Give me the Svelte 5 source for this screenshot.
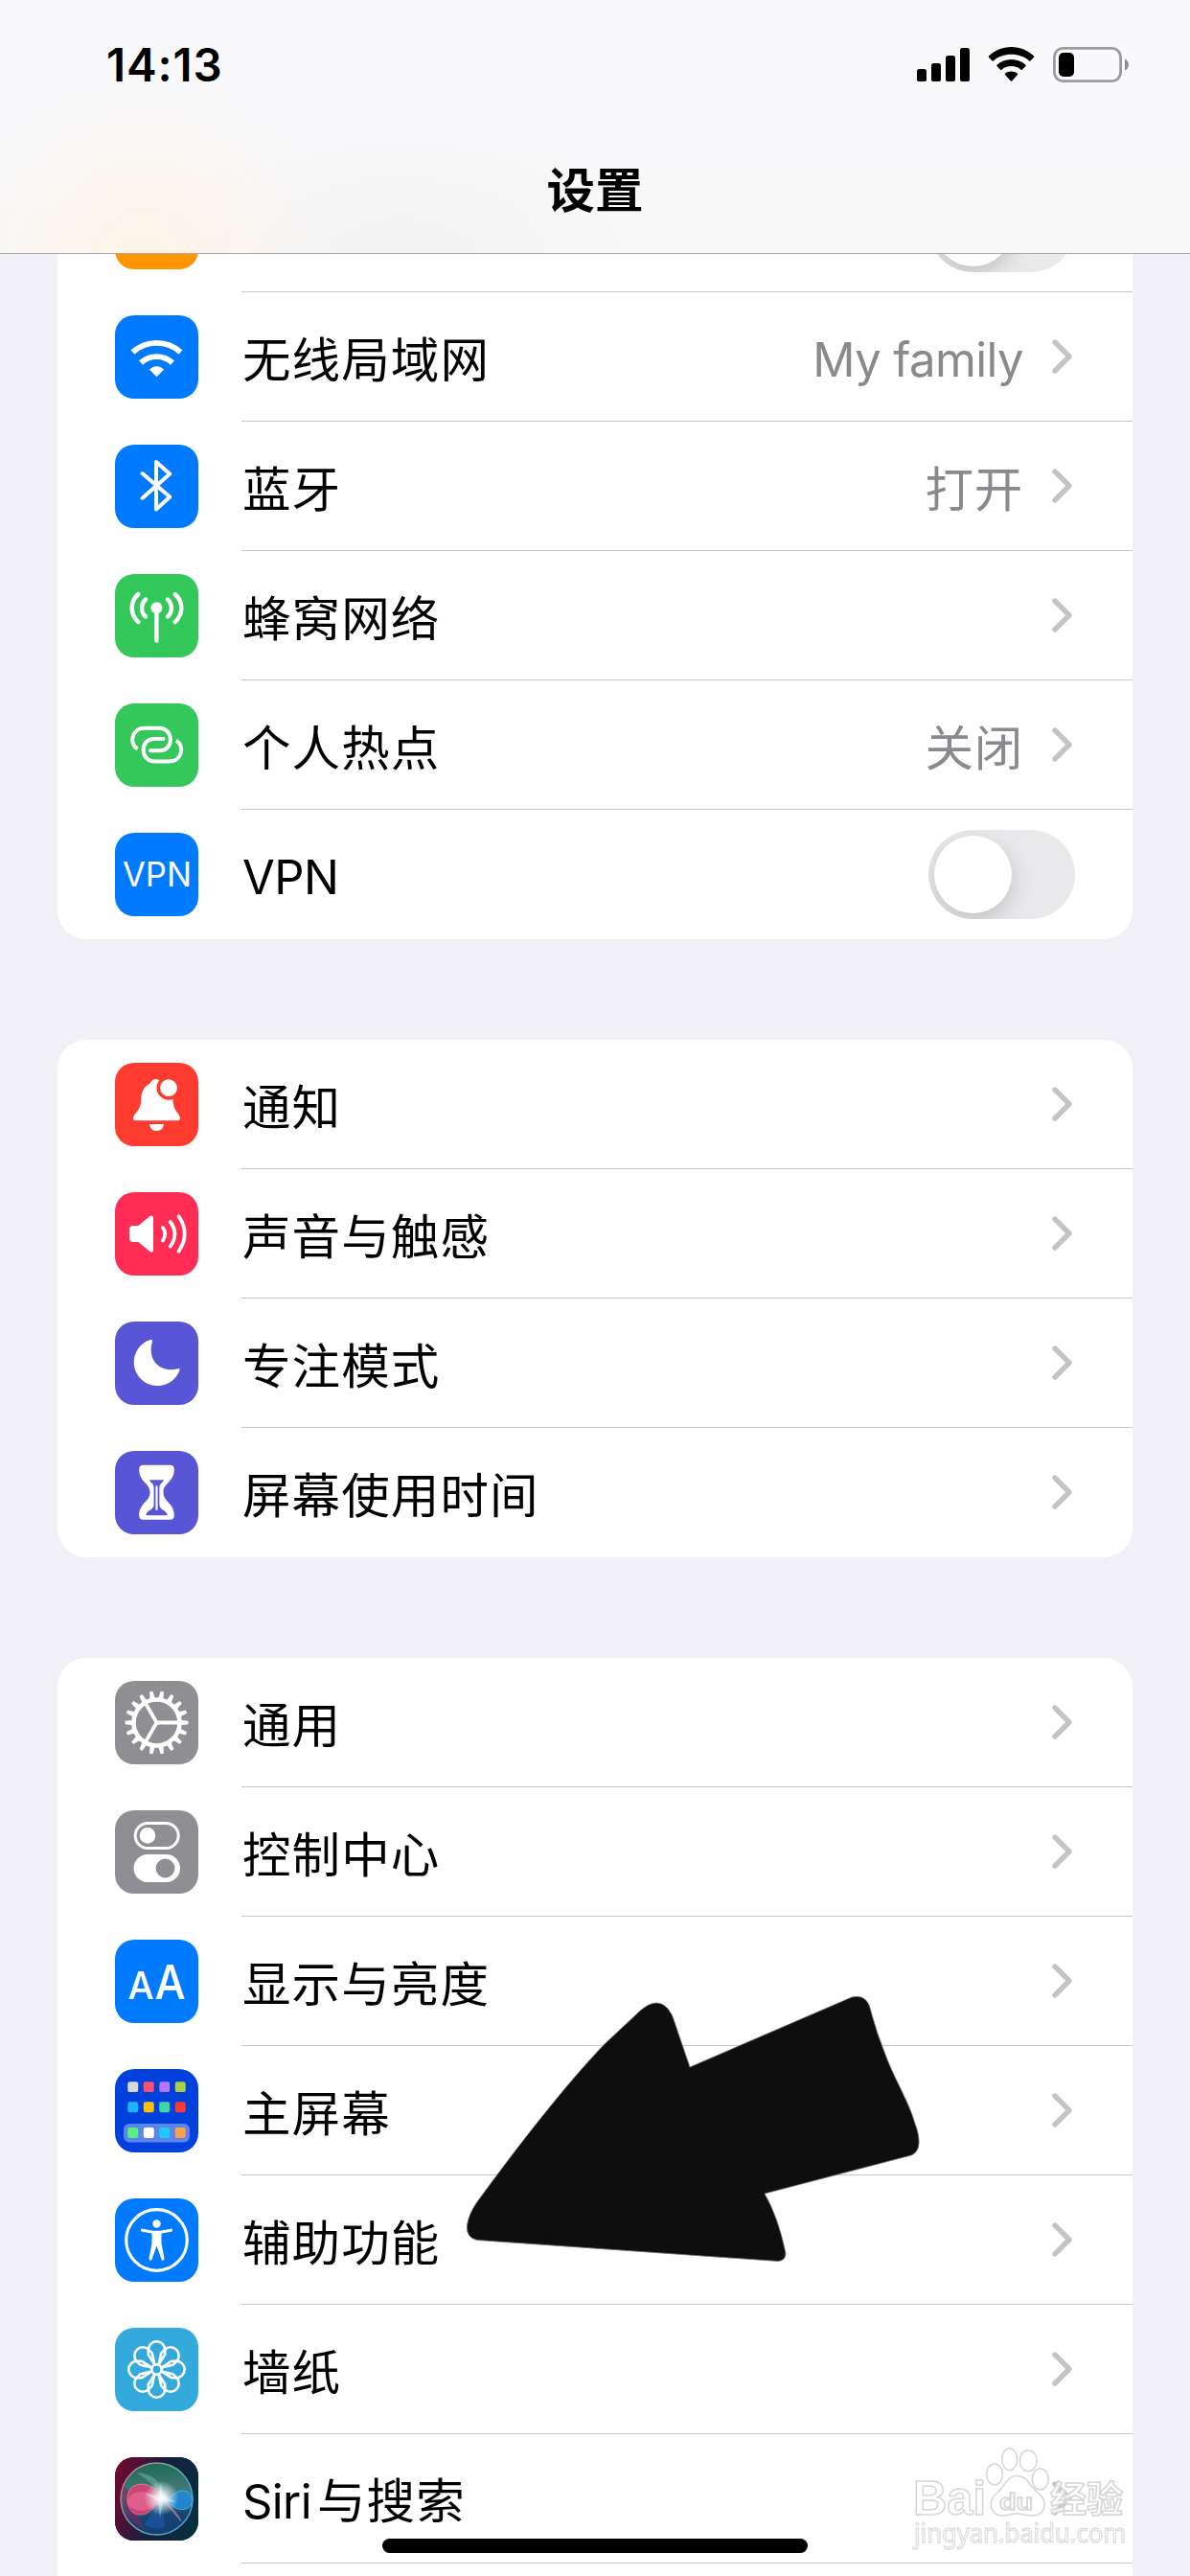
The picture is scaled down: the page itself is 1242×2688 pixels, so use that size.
<script>
    const groups = [
        [
            { icon: "airplane", color: "#ff9500", label: "", toggle: true },
            { icon: "wifi", color: "#007aff", label: "无线局域网", value: "My family" },
            { icon: "bluetooth", color: "#007aff", label: "蓝牙", value: "打开" },
            { icon: "cellular", color: "#34c759", label: "蜂窝网络" },
            { icon: "hotspot", color: "#34c759", label: "个人热点", value: "关闭" },
            { icon: "vpn", color: "#007aff", label: "VPN", toggle: true },
        ],
        [
            { icon: "bell", color: "#ff3b30", label: "通知" },
            { icon: "sound", color: "#ff2d55", label: "声音与触感" },
            { icon: "moon", color: "#5856d6", label: "专注模式" },
            { icon: "hourglass", color: "#5856d6", label: "屏幕使用时间" },
        ],
        [
            { icon: "gear", color: "#8e8e93", label: "通用" },
            { icon: "control", color: "#8e8e93", label: "控制中心" },
            { icon: "display", color: "#007aff", label: "显示与亮度" },
            { icon: "home", color: "#0040dd", label: "主屏幕" },
            { icon: "access", color: "#007aff", label: "辅助功能" },
            { icon: "wallpaper", color: "#34aadc", label: "墙纸" },
            { icon: "siri", color: "#10232f", label: "Siri与搜索" },
            { icon: "", color: "#fff", label: "" },
        ],
    ];

    const teeth = Array.from({ length: 18 }, (_, i) => i * 20);
    const petals = [0, 45, 90, 135, 180, 225, 270, 315];
    const cols = [13.3, 29.8, 46.3, 62.8];
    // home screen icon: two rows of apps and the dock
    const apps = [
        { y: 13.2, colors: ["#d8d8d8", "#ff4f6d", "#b973ff", "#abd13d"] },
        { y: 34.3, colors: ["#1fb4ff", "#ffc00a", "#3fd6a3", "#ff3a35"] },
        { y: 61, colors: ["#5bf07b", "#ffffff", "#1fc9ff", "#ff9e4c"] },
    ];

    // latin runs are set a bit smaller than the chinese ones
    function runs(text) {
        return text.split(/([A-Za-z ]+)/).filter((part) => part != "");
    }
    function isLatin(part) {
        return /^[A-Za-z ]+$/.test(part);
    }
</script>

<div class="phone">
    <header>
        <div class="status">
            <span class="time">14:13</span>
            <svg class="signs" width="224" height="40" viewBox="956 48 224 40">
                <rect x="957" y="72" width="10" height="13" rx="2.6" />
                <rect x="972" y="66" width="10" height="19" rx="2.6" />
                <rect x="987" y="58" width="10" height="27" rx="2.6" />
                <rect x="1002" y="50" width="10" height="35" rx="2.6" />
                <path d="M1055.500 49C1046.300 49 1038 52.600 1031.900 58.500Q1031.500 59.100 1032 59.700L1035.600 63.400Q1036.300 64 1036.900 63.400C1041.800 58.900 1048.300 56.700 1055.500 56.700S1069.200 58.900 1074.100 63.400Q1074.700 64 1075.400 63.400L1079 59.700Q1079.500 59.100 1079.100 58.500C1073 52.600 1064.700 49 1055.500 49Z" />
                <path d="M1055.500 62C1049.700 62 1044.500 64.200 1040.500 67.800Q1040 68.300 1040.500 68.900L1044.200 72.700Q1044.800 73.300 1045.400 72.700C1048.100 70.400 1051.500 69.100 1055.500 69.100S1062.900 70.400 1065.600 72.700Q1066.200 73.300 1066.800 72.700L1070.500 68.900Q1071 68.300 1070.500 67.800C1066.500 64.200 1061.300 62 1055.500 62Z" />
                <path d="M1055.500 74.500C1052.900 74.500 1050.700 75.300 1049 76.700Q1048.400 77.300 1049 77.900L1054.900 84.400Q1055.500 85 1056.100 84.400L1062 77.900Q1062.600 77.300 1062 76.700C1060.300 75.300 1058.100 74.500 1055.500 74.500Z" />
                <rect x="1100.400" y="50.400" width="69.200" height="34.200" rx="9" fill="none" stroke="#9b9b9d" stroke-width="2.800" />
                <rect x="1105" y="55" width="16" height="25" rx="5" />
                <path d="M1174 61.500C1179.200 63.500 1179.200 71.500 1174 73.500Z" fill="#8d8d8f" />
            </svg>
        </div>
        <h1>设置</h1>
    </header>

    <main>
        {#each groups as group}
            <section>
                {#each group as row}
                    <div class="row">
                        <div class="icon" style="background-color: {row.color}">
                            <svg width="87" height="87" viewBox="0 0 87 87" fill="#fff" stroke-linecap="round" stroke-linejoin="round">
                                {#if row.icon == "wifi"}
                                    <g fill="none" stroke="#fff" stroke-width="5.800" stroke-linecap="butt">
                                        <path d="M18.500 38.500A37 37 0 0 1 68.500 38.500" />
                                        <path d="M27 49.500A24.500 24.500 0 0 1 60 49.500" />
                                    </g>
                                    <path d="M35.800 56.600Q43.500 49.400 51.200 56.600L43.500 64.200Z" />
                                {:else if row.icon == "bluetooth"}
                                    <path d="M28.600 30L57.200 54.600L43 67.500V18L57.200 30.600L28.600 55.800" fill="none" stroke="#fff" stroke-width="4" />
                                {:else if row.icon == "cellular"}
                                    <circle cx="43.400" cy="35.300" r="6" />
                                    <path d="M43.400 36V69.500M32 26.500C26.800 31 26.800 40 32 44.500M55 26.500C60.200 31 60.200 40 55 44.500M24.300 21C15.500 29 15.500 42 24.300 50M62.700 21C71.500 29 71.500 42 62.700 50" fill="none" stroke="#fff" stroke-width="4.400" />
                                {:else if row.icon == "hotspot"}
                                    <g fill="none" stroke="#fff" stroke-width="4" stroke-linecap="butt">
                                        <path d="M23.600 47.400C14.500 43 17 25.700 31 25.700H46C61.500 25.700 62 49.300 46.500 49.300H37" />
                                        <path d="M50.500 37H41C25.500 37 26 60.500 41.500 60.500H56.500C70.500 60.500 73 43.500 63.800 38.800" />
                                    </g>
                                    <path d="M37 49.300h.1M50.400 37h.1" stroke="#fff" stroke-width="4" />
                                {:else if row.icon == "vpn"}
                                    <text x="8" y="56" font-size="36" textLength="72" lengthAdjust="spacingAndGlyphs">VPN</text>
                                {:else if row.icon == "bell"}
                                    <path d="M43.500 17C38.500 17 37.500 20 36.500 21.500C30 25 27.300 30.500 27.300 38C27.300 51 19 52.500 19 58Q19 60.300 22 60.300H65Q68 60.300 68 58C68 52.500 60.500 51 60.500 38Q60 22 43.500 17Z" />
                                    <path d="M36 64H51C50.500 68.500 47.500 71 43.500 71S36.500 68.500 36 64Z" />
                                    <circle cx="56" cy="26.200" r="10.700" stroke={row.color} stroke-width="3.600" />
                                {:else if row.icon == "sound"}
                                    <path d="M19 35H24.500L36 25.300Q40 23 40 27V60Q40 64 36 61.700L24.500 52H19Q15 52 15 48V39Q15 35 19 35Z" />
                                    <path d="M50 37Q54.500 43.500 50 50.500M57.800 31Q67 43.500 57.800 56.500M66.500 25.200Q79 43.500 66.500 61.800" fill="none" stroke="#fff" stroke-width="3.800" />
                                {:else if row.icon == "moon"}
                                    <path d="M37 19A24.600 24.600 0 1 0 67.500 50.800Q68 48.500 65.500 49.200C46 54 33.500 40 38.900 21Q39.200 18.300 37 19Z" />
                                {:else if row.icon == "hourglass"}
                                    <path d="M29.500 14.700H57.500Q61.800 14.700 61.800 19C61.800 33 50.500 33 50.500 43.300S61.800 54 61.800 67.500Q61.800 71.800 57.500 71.800H29.500Q25.200 71.800 25.200 67.500C25.200 54 36.500 53.500 36.500 43.300S25.200 33 25.200 19Q25.200 14.700 29.500 14.700Z" />
                                    <path d="M36 30.200H51Q50.500 32.500 47.500 34.500Q46.400 36 46.400 39V56.500Q46.800 60 51.500 62.500Q55 65 54.500 67.300H32.500Q32 65 35.500 62.500Q40.200 60 40.600 56.500V39Q40.600 36 39.500 34.500Q36.500 32.500 36 30.200Z" fill={row.color} />
                                    <path d="M43.500 37V61" stroke="#fff" stroke-width="2.200" />
                                {:else if row.icon == "gear"}
                                    {#each teeth as angle}
                                        <path d="M68 40.700L76.500 41.800V45.200L68 46.300Z" transform="rotate({angle} 43.500 43.500)" />
                                    {/each}
                                    <g fill="none" stroke="#fff">
                                        <circle cx="43.500" cy="43.500" r="24" stroke-width="4.600" />
                                        <path d="M43.500 43.500H67M43.500 43.500L32 23.600M43.500 43.500L32 63.400" stroke-width="3.800" />
                                    </g>
                                    <circle cx="43.500" cy="43.500" r="2.600" />
                                {:else if row.icon == "control"}
                                    <rect x="21.200" y="13.500" width="45" height="26" rx="13" fill="none" stroke="#fff" stroke-width="3" />
                                    <circle cx="34" cy="26.400" r="8.300" />
                                    <rect x="19.500" y="46" width="48.500" height="29" rx="14.500" />
                                    <circle cx="52.500" cy="60.500" r="9.900" fill={row.color} />
                                {:else if row.icon == "display"}
                                    <text class="letter" x="13.500" y="62" font-size="40" textLength="27" lengthAdjust="spacingAndGlyphs">A</text>
                                    <text class="letter" x="41.500" y="62" font-size="50" textLength="32" lengthAdjust="spacingAndGlyphs">A</text>
                                {:else if row.icon == "home"}
                                    <rect x="9" y="57" width="69" height="19.600" rx="6" opacity="0.36" />
                                    {#each apps as line}
                                        {#each line.colors as c, i}
                                            <rect x={cols[i]} y={line.y} width="10.900" height="10.900" rx="2.200" fill={c} />
                                        {/each}
                                    {/each}
                                {:else if row.icon == "access"}
                                    <circle cx="43.500" cy="43.500" r="31.800" fill="none" stroke="#fff" stroke-width="3.200" />
                                    <circle cx="43.500" cy="26.500" r="4.200" />
                                    <path d="M28.500 33.200L38.500 35Q43.500 35.700 48.500 35L58.500 33.200" fill="none" stroke="#fff" stroke-width="3.200" />
                                    <path d="M38.500 34H48.500V47L51.500 62.500Q51.500 65.500 48.800 64.500L43.500 49.500L38.200 64.500Q35.500 65.500 35.500 62.500L38.500 47Z" />
                                {:else if row.icon == "wallpaper"}
                                    <g fill="none" stroke="#fff" stroke-width="2.600">
                                        {#each petals as angle}
                                            <path d="M-2 -5L-8.700 -15.500V-20.500A8.700 8.700 0 0 1 8.700 -20.500V-15.500L2 -5" transform="translate(43.500 43.500) rotate({angle})" />
                                        {/each}
                                        <circle cx="43.500" cy="43.500" r="5.200" />
                                    </g>
                                {:else if row.icon == "siri"}
                                    <defs>
                                        <linearGradient id="siriBack" x1="0" y1="0.300" x2="1" y2="0.600">
                                            <stop offset="0" stop-color="#6d0a30" />
                                            <stop offset="0.500" stop-color="#1b1d3f" />
                                            <stop offset="1" stop-color="#06303d" />
                                        </linearGradient>
                                        <linearGradient id="siriBall" x1="0.400" y1="0" x2="0.500" y2="1">
                                            <stop offset="0" stop-color="#1d6b55" />
                                            <stop offset="0.450" stop-color="#447a7c" />
                                            <stop offset="0.750" stop-color="#17446f" />
                                            <stop offset="1" stop-color="#123e78" />
                                        </linearGradient>
                                        <linearGradient id="siriRim" x1="0" y1="0.300" x2="1" y2="0.700">
                                            <stop offset="0" stop-color="#d0708a" />
                                            <stop offset="0.500" stop-color="#69b59a" />
                                            <stop offset="1" stop-color="#3fa6d6" />
                                        </linearGradient>
                                        <radialGradient id="siriGlow">
                                            <stop offset="0" stop-color="#fff" />
                                            <stop offset="0.250" stop-color="#fff" stop-opacity="0.850" />
                                            <stop offset="1" stop-color="#dff" stop-opacity="0" />
                                        </radialGradient>
                                    </defs>
                                    <rect width="87" height="87" fill="url(#siriBack)" />
                                    <circle cx="43.500" cy="43.500" r="37.500" fill="url(#siriBall)" stroke="url(#siriRim)" stroke-width="1.500" />
                                    <path d="M9 30Q2 62 32 76Q20 60 22 42Z" fill="#8c1f5c" opacity="0.550" />
                                    <path d="M50 43C42 30 30 25 20 30C10 35 11 55 21 59C34 64 42 50 50 43Z" fill="#e83c74" opacity="0.850" stroke="#ff9db8" stroke-width="0.700" />
                                    <ellipse cx="28" cy="46" rx="15" ry="10" fill="#f58bb0" opacity="0.400" />
                                    <path d="M49 42C57 48 61 34 72 35C82 37 84 51 74 54C62 57 58 48 49 42Z" fill="#1f8cdd" opacity="0.850" stroke="#6fd4f5" stroke-width="0.700" />
                                    <path d="M49 43L31 70Q40 77 52 73Z" fill="#1d5fb8" opacity="0.500" />
                                    <path d="M49 43L69 67Q66 58 49 43Z" fill="#d48ab8" stroke="#c77cae" opacity="0.700" />
                                    <path d="M22 16Q50 18 50 43Q42 28 22 16Z" fill="#a2cdb9" opacity="0.350" />
                                    <circle cx="48.500" cy="42.500" r="18" fill="url(#siriGlow)" />
                                    <path d="M48 25L50 39L64 47L50 46L47 64L45 46L31 38L46 40Z" fill="#fff" opacity="0.350" />
                                {/if}
                            </svg>
                        </div>
                        <div class="body">
                            <span class="label">{#each runs(row.label) as part}<span class:latin={isLatin(part)}>{part}</span>{/each}</span>
                            {#if row.value}
                                <span class="value" class:latin={isLatin(row.value)}>{row.value}</span>
                            {/if}
                            {#if row.toggle}
                                <span class="toggle"><span class="knob"></span></span>
                            {:else}
                                <svg class="chevron" width="23" height="38" viewBox="0 0 23 38">
                                    <path d="M3 4L18 19L3 34" fill="none" stroke="#c4c4c6" stroke-width="5.400" stroke-linecap="round" stroke-linejoin="round" />
                                </svg>
                            {/if}
                        </div>
                    </div>
                {/each}
            </section>
        {/each}
    </main>

    <svg class="arrow" width="480" height="280" viewBox="484 2082 480 280">
        <path d="M663 2103Q684 2081 697 2096Q702 2102 704 2110L720 2157L889 2084Q902 2081 907 2092Q915 2122 926 2149C935 2172 949 2194 955 2216C961 2232 961 2245 951 2249L798 2289Q812 2313 820 2351Q820 2359 812 2359.500L498 2337.500Q486 2335 487.500 2322Q489 2311 497 2299C540 2240 592 2173 632 2132Z" fill="#0e0e0e" stroke="#777" stroke-width="0.800" />
    </svg>

    <svg class="watermark" width="240" height="125" viewBox="0 0 240 125" fill="#fff" fill-opacity="0.750" stroke="#d6d6d6" stroke-width="1.500">
        <text class="brand" x="8" y="79" font-size="50" textLength="76" lengthAdjust="spacingAndGlyphs">Bai</text>
        <ellipse cx="93" cy="37" rx="8.500" ry="11" />
        <ellipse cx="108.700" cy="21.300" rx="8" ry="11.500" />
        <ellipse cx="128.300" cy="22.700" rx="9" ry="11" />
        <ellipse cx="140.700" cy="42" rx="8.500" ry="11" />
        <path d="M116.500 38.500C128 38.500 129 49 138 56C149 64 147 80 133 80C125 80 123 78 116.500 78S108 80 101 80C88 80 85 64 96 56C105 49 105 38.500 116.500 38.500Z" />
        <text class="brand" x="98" y="74" font-size="24" textLength="35" lengthAdjust="spacingAndGlyphs">du</text>
        <text class="brand" x="151" y="76" font-size="38">经验</text>
        <text class="url" x="9" y="108" font-size="27" textLength="221" lengthAdjust="spacingAndGlyphs">jingyan.baidu.com</text>
    </svg>

    <div class="indicator"></div>
</div>

<style>
    :global(body) {
        background: #f1f0f6;
    }
    .phone {
        position: relative;
        width: 1242px;
        height: 2688px;
        overflow: hidden;
        background: #f1f0f6;
        font-family: Inter, "Noto Sans CJK SC", sans-serif;
        color: #000;
    }
    header {
        position: relative;
        z-index: 1;
        box-sizing: border-box;
        height: 265px;
        border-bottom: 1px solid #a9a9ab;
        background:
            radial-gradient(ellipse 190px 180px at 150px 265px, rgba(255, 243, 230, 0.9), rgba(255, 243, 230, 0)),
            radial-gradient(ellipse 260px 150px at 420px 265px, rgba(242, 242, 243, 0.9), rgba(242, 242, 243, 0)),
            linear-gradient(#f9f9fb 60%, #f8f8f8);
    }
    .status {
        display: flex;
        justify-content: space-between;
        align-items: center;
        height: 136px;
        padding: 0 62px 0 111px;
    }
    .time {
        font-size: 47.5px;
        font-weight: 600;
        letter-spacing: 0.9px;
        line-height: 60px;
    }
    h1 {
        margin: 26px 0 0;
        font-size: 50.5px;
        font-weight: 700;
        line-height: 74px;
        text-align: center;
    }
    main {
        display: flex;
        flex-direction: column;
        gap: 105px;
        margin-top: -95px;
        padding: 0 60px;
    }
    section {
        overflow: hidden;
        border-radius: 30px;
        background: #fff;
    }
    .row {
        display: flex;
        align-items: center;
        gap: 45px;
        height: 135px;
        padding-left: 60px;
    }
    .icon {
        flex: none;
        width: 87px;
        height: 87px;
        overflow: hidden;
        border-radius: 20px;
    }
    .icon svg {
        display: block;
    }
    .letter {
        font-weight: 500;
    }
    .body {
        display: flex;
        flex: 1;
        align-items: center;
        box-sizing: border-box;
        height: 135px;
        padding-right: 60px;
        border-bottom: 1px solid #c6c6c8;
    }
    .row:last-child .body {
        border-bottom-color: transparent;
    }
    .label {
        flex: 1;
        padding: 7px 0 0 1px;
        font-size: 50.5px;
        letter-spacing: 1.1px;
        line-height: 70px;
    }
    .value {
        margin-right: 30px;
        padding-top: 7px;
        font-size: 50.5px;
        letter-spacing: 0.8px;
        line-height: 70px;
        color: #8a8a8e;
    }
    .latin {
        font-size: 49px;
        letter-spacing: -0.6px;
    }
    .latin + span {
        margin-left: 6px;
    }
    .chevron {
        margin-right: 1px;
    }
    .toggle {
        box-sizing: border-box;
        width: 153px;
        height: 93px;
        margin-left: 0;
        padding: 6px;
        overflow: hidden;
        border-radius: 47px;
        background: #e9e9eb;
    }
    .label .latin + span {
        margin-left: 6px;
    }
    .value + .chevron {
        margin-left: 0;
    }
    .knob {
        display: block;
        width: 81px;
        height: 81px;
        border-radius: 50%;
        background: #fff;
        box-shadow: 0 8px 22px rgba(0, 0, 0, 0.17);
    }
    .arrow {
        position: absolute;
        left: 484px;
        top: 2082px;
    }
    .watermark {
        position: absolute;
        left: 945px;
        top: 2545px;
        overflow: visible;
    }
    .brand {
        font-family: "Liberation Sans", "Noto Sans CJK SC", sans-serif;
        font-weight: 700;
    }
    .url {
        font-family: "Noto Sans", sans-serif;
        stroke-width: 1px;
    }
    .indicator {
        position: absolute;
        left: 399px;
        top: 2649px;
        width: 444px;
        height: 15px;
        border-radius: 8px;
        background: #000;
    }
</style>
